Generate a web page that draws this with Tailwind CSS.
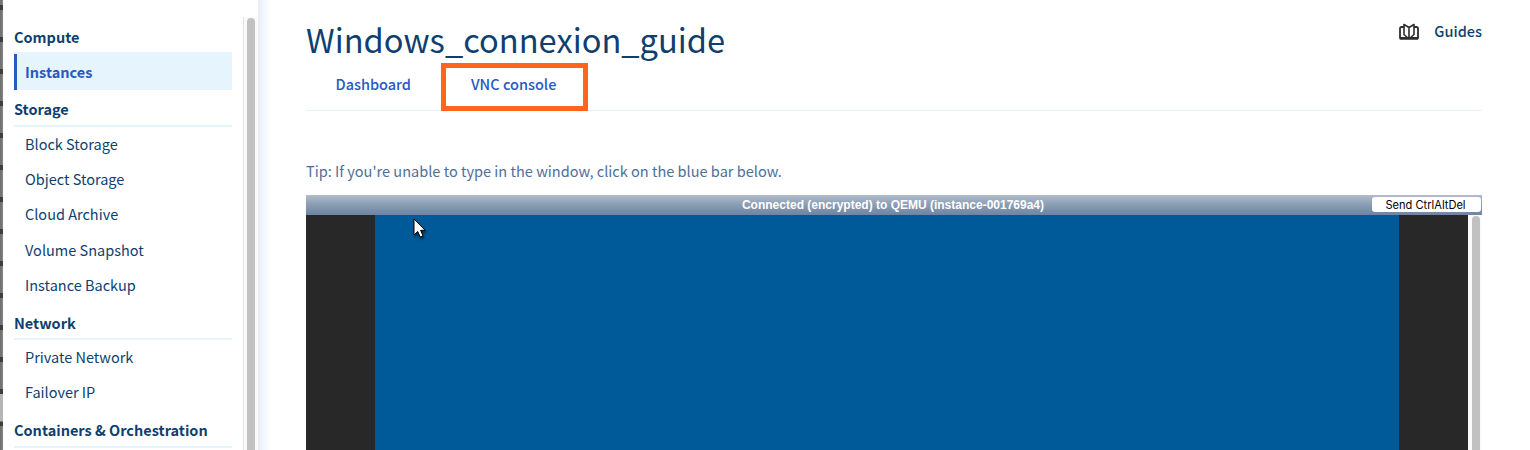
<!DOCTYPE html>
<html lang="en">
<head>
<meta charset="utf-8">
<title>Windows_connexion_guide</title>
<script src="https://cdn.jsdelivr.net/npm/@tailwindcss/browser@4"></script>
</head>
<body class="flex h-[450px] w-[1530px] overflow-hidden bg-white font-['Noto_Sans_CJK_SC','Source_Sans_Pro',sans-serif] text-[14.5px] text-[#0f3f70]">
  <div class="flex h-full w-[3px] shrink-0 flex-col bg-linear-to-r from-[#6d6d6d] to-[#858585]">
    <div class="h-[394px] bg-[repeating-linear-gradient(to_bottom,transparent_0_5px,#3d3d3d_5px_10px,transparent_10px_32px)]"></div>
    <div class="h-[27px] bg-[#b5b5b5]"></div>
    <div class="mt-px h-1 bg-[#3d3d3d]"></div>
  </div>

  <nav class="flex h-full w-[240px] shrink-0 flex-col pl-[11px] pr-[11px]">
    <h2 class="mt-[25px] h-[27px] font-bold leading-6">Compute</h2>
    <a class="flex h-[38px] flex-col bg-[#e5f4fd] pt-0.5 font-bold text-[#2859c0]"><span class="h-9 border-l-[3px] border-[#2859c0] pl-2 leading-[35px]">Instances</span></a>
    <h2 class="h-[37px] border-b-2 border-[#e5f4fd] pt-[7px] font-bold leading-6">Storage</h2>
    <ul class="-mt-px flex flex-col pl-[11px] leading-[35.2px]">
      <li>Block Storage</li>
      <li>Object Storage</li>
      <li>Cloud Archive</li>
      <li class="pt-[0.4px]">Volume Snapshot</li>
      <li>Instance Backup</li>
    </ul>
    <h2 class="mt-[0.6px] h-[37px] border-b-2 border-[#e5f4fd] pt-2 font-bold leading-6">Network</h2>
    <ul class="-mt-px mb-px flex flex-col pl-[11px] leading-[35px]">
      <li>Private Network</li>
      <li>Failover IP</li>
    </ul>
    <h2 class="h-[38px] border-b-2 border-[#e5f4fd] pt-2 font-bold leading-6"><span class="whitespace-nowrap">Containers &amp; Orchestration</span></h2>
  </nav>
  <div class="mt-[17px] flex w-[15px] shrink-0 overflow-hidden border-l border-[#e4e4e4] bg-[#fafafa] pl-[3px]">
    <div class="mt-px h-full w-2 rounded-t-full bg-[#c1c1c1]"></div>
  </div>
  <div class="w-[13px] shrink-0 bg-linear-to-r from-[#e7ecf8] via-[#f5f7fe] to-white"></div>

  <main class="ml-[35px] flex w-[1176px] shrink-0 flex-col">
    <header class="flex h-[63px] justify-between">
      <h1 class="pt-[15px] text-[32.65px] leading-[48px]">Windows_connexion_guide</h1>
      <a class="mt-4 flex h-8 items-center gap-[15px] font-medium">
        <svg class="h-[18px] w-5" viewBox="0 0 20 18" fill="none" stroke="#2d2d2d" stroke-width="1.800" stroke-linejoin="round" stroke-linecap="round">
          <path d="M4.500 4H2.600Q1 4 1 5.600V14.800H19V5.600Q19 4 17.400 4H15.500"/>
          <path d="M1.500 15.800H18.500" stroke-width="2"/>
          <path d="M10 4.500V14M10 4.500L5 1.500V11.500L8.300 14.500M10 4.500L15 1.500V11.500L11.700 14.500" stroke-width="1.600"/>
        </svg>
        <span class="-mt-0.5">Guides</span>
      </a>
    </header>
    <div class="flex h-12 border-b border-[#e0f3fc] font-medium text-[#2859c0]">
      <a class="w-[135px] pl-[29.500px] leading-[42px]">Dashboard</a>
      <a class="h-12 w-[147px] border-5 border-[#ff661b] pl-[25px] leading-[32px]">VNC console</a>
    </div>
    <p class="mt-12 h-9 text-[14.55px] leading-6 text-[#4d7099]">Tip: If you're unable to type in the window, click on the blue bar below.</p>
    <div class="relative flex h-5 items-center justify-center bg-linear-to-b from-[#b2bdcd] from-0% via-[#899cb3] via-50% to-[#6e84a3] pr-0.5 font-['Liberation_Sans',Arial,sans-serif] text-xs font-bold text-white">
      <span>Connected (encrypted) to QEMU (instance-001769a4)</span>
      <button class="absolute right-px top-0.5 h-[15px] w-[109px] rounded-[3px] bg-white pr-0.5 font-[Inter,sans-serif] text-[11.100px] leading-[14px] font-normal text-black">Send CtrlAltDel</button>
    </div>
    <div class="flex h-[235px]">
      <div class="relative flex w-[1162px] justify-center bg-[#282828] pr-px">
        <div class="h-full w-[1024px] bg-[#005998]"></div>
        <svg class="absolute left-[107px] top-[3px] h-6 w-5 drop-shadow-[1px_2px_1px_rgba(0,0,0,0.5)]" viewBox="0 0 20 24"><path d="M1 1V17L4.700 13.500L7.200 19L10 17.800L7.600 12.300H12.200Z" fill="#fff" stroke="#000" stroke-width="1"/></svg>
      </div>
      <div class="w-3.5 bg-[#fafafa] pl-1 pt-px"><div class="h-[234px] w-2 rounded-t-full bg-[#c1c1c1]"></div></div>
    </div>
  </main>
</body>
</html>
